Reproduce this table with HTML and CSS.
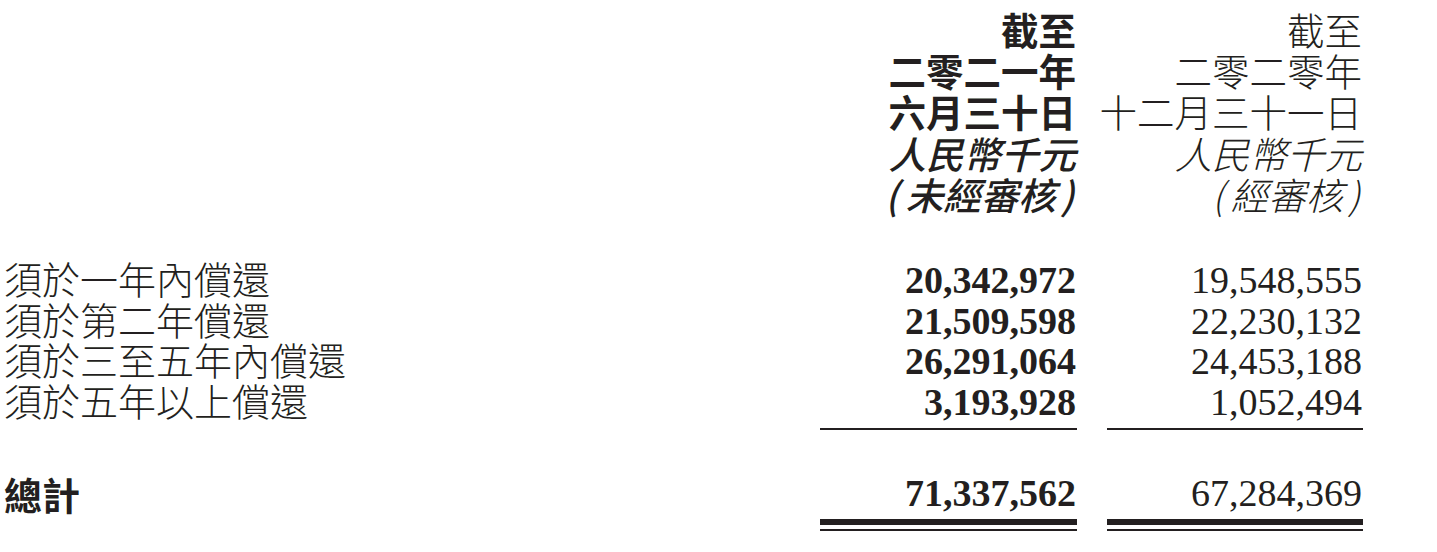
FILE: index.html
```html
<!DOCTYPE html>
<html lang="zh-Hant">
<head>
<meta charset="utf-8">
<title>到期分析</title>
<link rel="stylesheet" href="styles.css">
</head>
<body>
<div class="sheet">
  <div class="grid head">
    <div class="label"></div>
    <div class="hcol cur">
      <div>截至</div>
      <div>二零二一年</div>
      <div>六月三十日</div>
      <div class="it">人民幣千元</div>
      <div class="it"><span class="po">(</span>未經審核<span class="pc">)</span></div>
    </div>
    <div class="hcol prev">
      <div>截至</div>
      <div>二零二零年</div>
      <div>十二月三十一日</div>
      <div class="it">人民幣千元</div>
      <div class="it"><span class="po">(</span>經審核<span class="pc">)</span></div>
    </div>
  </div>

  <div class="grid body">
    <div class="label">須於一年內償還</div>
    <div class="num b">20,342,972</div>
    <div class="num">19,548,555</div>

    <div class="label">須於第二年償還</div>
    <div class="num b">21,509,598</div>
    <div class="num">22,230,132</div>

    <div class="label">須於三至五年內償還</div>
    <div class="num b">26,291,064</div>
    <div class="num">24,453,188</div>

    <div class="label">須於五年以上償還</div>
    <div class="num b last">3,193,928</div>
    <div class="num last">1,052,494</div>
  </div>

  <div class="grid total">
    <div class="label strong">總計</div>
    <div class="dbl"><div class="num b thick">71,337,562</div></div>
    <div class="dbl"><div class="num thick">67,284,369</div></div>
  </div>
</div>
</body>
</html>
```

FILE: styles.css
```css
html, body {
  margin: 0;
  padding: 0;
  background: #ffffff;
}

body {
  color: #231f20;
  font-family: "Noto Sans CJK TC", "Noto Sans CJK SC", sans-serif;
}

.sheet {
  width: 1437px;
  height: 552px;
  padding-top: 8px;
  box-sizing: border-box;
  overflow: hidden;
}

.grid {
  display: grid;
  grid-template-columns: 1fr 257px 256px;
  column-gap: 30px;
  padding: 0 74px 0 4px;
}

.hcol {
  display: flex;
  flex-direction: column;
  align-items: flex-end;
  font-size: 37.5px;
  line-height: 41.2px;
  white-space: nowrap;
  padding-right: 1px;
}

.hcol.cur {
  font-weight: 700;
}

.hcol.prev {
  font-weight: 300;
}

.hcol .it {
  font-style: italic;
}

.hcol.cur .it {
  font-weight: 500;
}

.po {
  margin-right: 7px;
}

.pc {
  margin-left: 5px;
  margin-right: 2px;
}

.body {
  margin-top: 46px;
}

.label {
  font-size: 38px;
  line-height: 40.7px;
  font-weight: 300;
  white-space: nowrap;
}

.body .label {
  margin-top: -2px;
  margin-bottom: 2px;
}

.label.strong {
  font-weight: 700;
}

.num {
  font-family: "Liberation Serif", "Times New Roman", serif;
  font-size: 38px;
  line-height: 40.7px;
  text-align: right;
  padding-right: 1px;
}

.num.b {
  font-weight: 700;
}

.num.last {
  padding-bottom: 5px;
  border-bottom: 2px solid #231f20;
}

.total {
  margin-top: 43px;
}

.total .label,
.total .num {
  line-height: 41px;
}

.dbl {
  padding-bottom: 4px;
  border-bottom: 2px solid #231f20;
}

.num.thick {
  padding-bottom: 5.5px;
  border-bottom: 6px solid #231f20;
}
```
